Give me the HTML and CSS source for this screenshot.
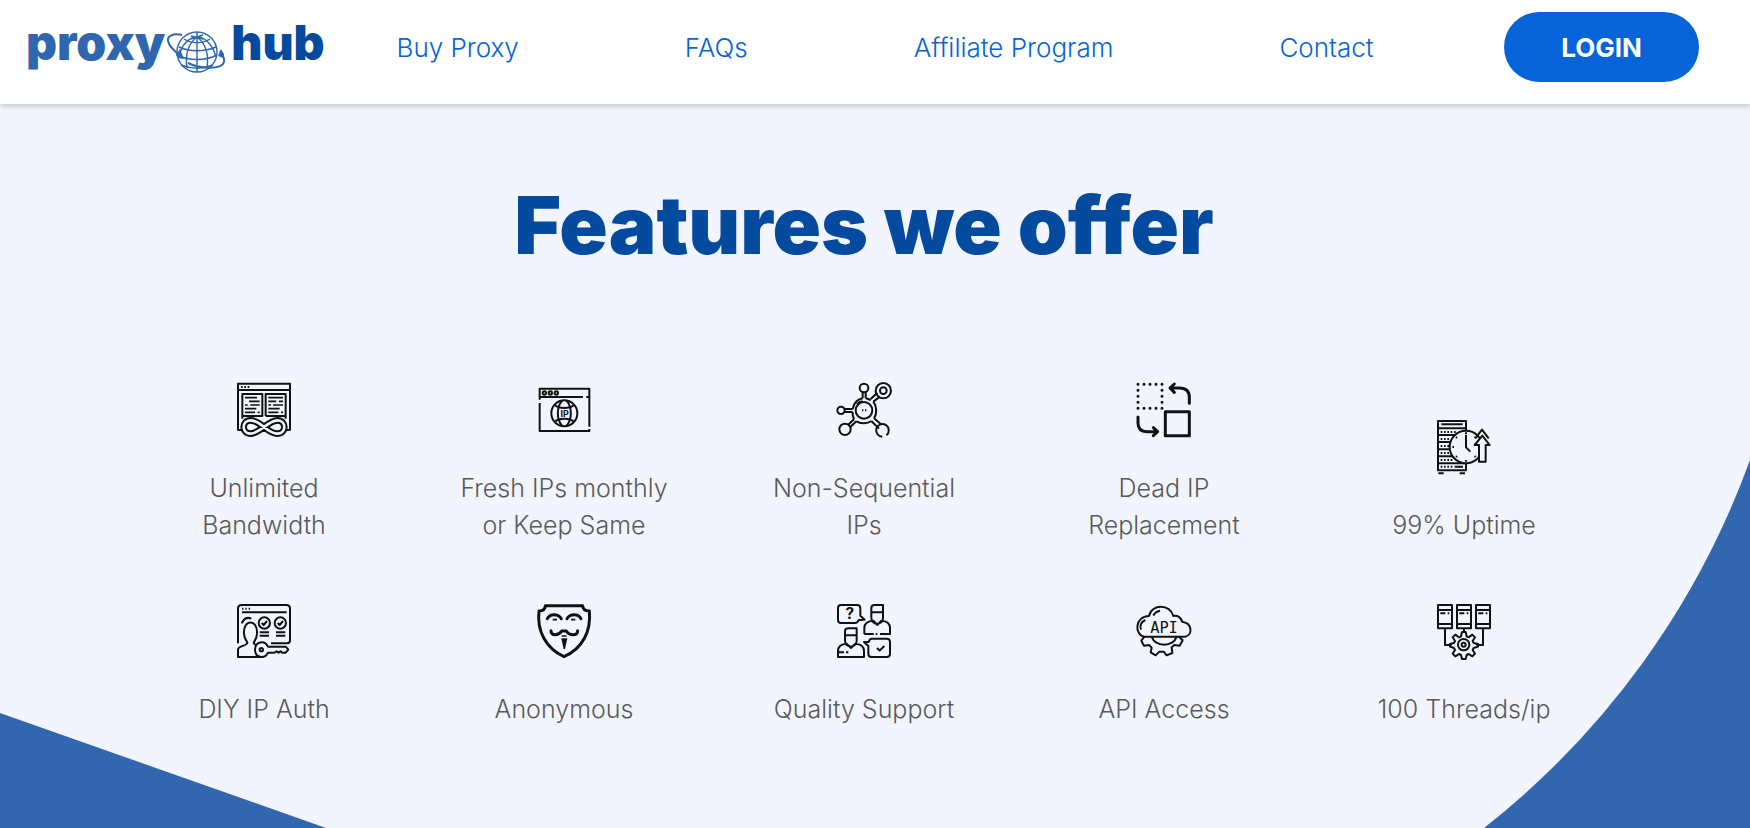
FILE: index.html
```html
<!DOCTYPE html>
<html lang="en">
<head>
    <meta charset="utf-8">
    <title>Proxy Hub</title>
    <meta name="viewport" content="width=device-width, initial-scale=1">
    <link rel="stylesheet" href="styles.css">
</head>
<body>
    <header class="header">
        <a class="logo" href="#">
            <span class="logo-proxy">proxy</span>
            <svg class="logo-globe" viewBox="0 0 58 44" aria-hidden="true">
                <g fill="none" stroke="#2f66b0" stroke-width="1.4">
                    <circle cx="30" cy="22" r="20"/>
                    <path d="M30 7C22 13 18 24 20 38M30 7c8 6 12 17 10 31M30 7v35M30 7c-8 0-16 8-18 20M30 7c8 0 16 8 19 20"/>
                    <path d="M24 6l12 3M36 5L24 9M30 2v6M17 9c8 5 18 5 26 0M12 17c10 5 26 5 37 0M10 25c12 6 28 6 40 0M14 35c10 4 22 4 32 0"/>
                </g>
                <g fill="none" stroke="#2f66b0" stroke-width="2">
                    <path d="M15 5C6 3 0 6 1 11c1 5 7 11 15 17"/>
                    <path d="M21 33c12 6 34 7 36-1 1-4-1-7-4-11"/>
                </g>
                <path fill="#2f66b0" d="M9 25l4-6 4 10-6-1zM51 26l3-7 3 5-1 4z"/>
            </svg>
            <span class="logo-hub">hub</span>
        </a>
        <nav class="nav">
            <a href="#">Buy Proxy</a>
            <a href="#">FAQs</a>
            <a href="#">Affiliate Program</a>
            <a href="#">Contact</a>
        </nav>
        <button class="login" type="button">LOGIN</button>
    </header>

    <main class="features">
        <svg class="shape shape-left" viewBox="0 0 326 115" aria-hidden="true"><path d="M0 0l326 115H0z"/></svg>
        <svg class="shape shape-right" viewBox="0 0 266 368" aria-hidden="true"><path d="M266 0A826 826 0 0 1 0 368h266z"/></svg>

        <h1 class="title">Features we offer</h1>

        <ul class="grid">
            <li class="item">
                <svg class="icon" viewBox="0 0 162 162" aria-hidden="true">
                    <path d="M15 141H3V2h156v139h-12M3 21h156"/>
                    <path d="M12 12h5M22 12h5M32 12h5"/>
                    <path d="M16 107V33h60v66H16M86 99V33h60v74M86 99h60"/>
                    <path class="thin" d="M24 44h36M36 55h32M24 66h8M40 66h28M24 77h34M24 88h30M62 88h6M94 44h44M94 55h24M126 55h12M94 66h8M108 66h30M94 77h34M94 88h30M132 88h6"/>
                    <path class="loop" d="M81 132C64 118 52 112 41 112c-28 0-28 40 0 40 12 0 24-8 40-20 16-12 28-20 40-20 28 0 28 40 0 40-11 0-23-6-40-20z"/>
                    <path class="loop-inner" d="M81 132C64 118 52 112 41 112c-28 0-28 40 0 40 12 0 24-8 40-20 16-12 28-20 40-20 28 0 28 40 0 40-11 0-23-6-40-20z"/>
                </svg>
                <span>Unlimited<br>Bandwidth</span>
            </li>
            <li class="item">
                <svg class="icon" viewBox="0 0 162 162" aria-hidden="true">
                    <path d="M8 50V17h149v114M8 60v84h149v-6M8 42h130M148 42h9"/>
                    <circle cx="22" cy="30" r="5"/><circle cx="40" cy="30" r="5"/><circle cx="58" cy="30" r="5"/>
                    <circle cx="82" cy="91" r="39"/>
                    <path d="M53 66c14 12 44 12 58 0M53 116c14-12 44-12 58 0M76 53c-18 18-18 58 0 76M88 53c18 18 18 58 0 76"/>
                    <text class="icon-text" x="83" y="101" font-size="27">IP</text>
                </svg>
                <span>Fresh IPs monthly<br>or Keep Same</span>
            </li>
            <li class="item">
                <svg class="icon" viewBox="0 0 162 162" aria-hidden="true">
                    <circle cx="81" cy="15" r="13"/><circle cx="139" cy="23" r="23"/><circle cx="139" cy="23" r="10"/>
                    <circle cx="12" cy="82" r="11"/><circle cx="24" cy="139" r="17"/>
                    <path d="M136 161a19 19 0 1 1 12-4"/>
                    <circle cx="81" cy="82" r="25"/>
                    <path d="M77 28v18M86 28v18M23 78h24M23 87h24M101 48l20-19M109 56l20-15M33 126l18-17M40 132l18-17M103 114l23 23M111 106l21 18"/>
                    <path d="M77 46C62 49 50 61 47 78M86 46c6 1 11 3 15 6M109 56c10 13 12 36 2 50M103 114c-12 8-32 9-45 1M51 109c-3-6-5-14-4-22M60 64c5-6 10-8 17-9"/>
                    <path d="M75 82h4M84 82h4"/>
                </svg>
                <span>Non-Sequential<br>IPs</span>
            </li>
            <li class="item">
                <svg class="icon bold" viewBox="0 0 162 162" aria-hidden="true">
                    <g stroke-linecap="round">
                        <path stroke-dasharray="0 18" d="M3 4h72v72H3V4"/>
                        <path d="M157 61V43c0-20-10-28-30-28h-27M112 3L99 15l13 13M3 102v18c0 18 10 26 27 26h30M49 134l13 12-13 12"/>
                    </g>
                    <path d="M85 86h72v72H85z"/>
                </svg>
                <span>Dead IP<br>Replacement</span>
            </li>
            <li class="item">
                <svg class="icon" viewBox="0 0 162 162" aria-hidden="true">
                    <path d="M3 3h84v148H3zM3 25h84M3 45h84M3 66h84M3 88h84M3 109h84M3 130h84"/>
                    <path d="M13 13h64M53 140h25M4 160h16M68 160h16"/>
                    <path stroke-dasharray="5 5" d="M11 36h46M11 57h30M11 78h28M11 99h28M11 120h38M11 140h36"/>
                    <circle class="paper" cx="87" cy="81" r="49"/>
                    <path d="M87 44v38l13 13M87 37v5M87 120v5M46 81h5M57 51l3 3M57 111l3-3M116 51l-3 3M116 111l-3-3"/>
                    <path class="paper" d="M126 125V75h-13l23-28 22 28h-12v50z"/>
                    <path d="M115 55l20-26 20 26"/>
                </svg>
                <span>99% Uptime</span>
            </li>
            <li class="item">
                <svg class="icon" viewBox="0 0 162 162" aria-hidden="true">
                    <path d="M3 118V14Q3 3 14 3h134q11 0 11 11v95q0 9-9 9h-48M15 25h134"/>
                    <path d="M15 14h4M25 14h4M35 14h4"/>
                    <circle cx="82" cy="57" r="17"/><circle cx="130" cy="57" r="17"/>
                    <path d="M74 57l6 6 10-12M122 57l6 6 10-12M68 85h28M68 95h28M117 85h28M117 95h28M14 58c8-18 20-18 29-14"/>
                    <path class="paper" d="M3 159v-22c0-12 24-10 28-20-1-8-9-10-10-28-3-45 42-45 39 0-1 18-8 20-10 28 3 8 16 9 25 14v28z"/>
                    <path class="paper" d="M93 128h53l8 9-8 9h-10l-5-4-6 4-6-4-7 4H93c-12 22-39 14-39-9s28-31 39-9z"/>
                    <circle cx="73" cy="137" r="5"/>
                </svg>
                <span>DIY IP Auth</span>
            </li>
            <li class="item">
                <svg class="icon bold" viewBox="0 0 162 162" aria-hidden="true">
                    <path d="M25 5h112c0 10 8 15 20 16 6 60-20 113-76 137C27 134-1 81 6 21c12-1 19-6 19-16z"/>
                    <path stroke-linecap="round" d="M31 44c8-16 33-16 42 0M90 44c9-16 34-16 42 0M42 80c0 16 23 16 32 1h14c9 15 34 15 34-1"/>
                    <path class="thin" d="M47 47h13M102 47h13M74 96h15"/>
                    <path class="solid" d="M73 103h18l-7 32h-4z"/>
                </svg>
                <span>Anonymous</span>
            </li>
            <li class="item">
                <svg class="icon" viewBox="0 0 162 162" aria-hidden="true">
                    <path d="M12 3h48q10 0 10 10v22l13 12-18 1q-3 9-11 9H12q-9 0-9-9V12q0-9 9-9z"/>
                    <text class="icon-text" x="38" y="46" font-size="46">?</text>
                    <path d="M103 42V12q0-9 10-9h25v39c0 23-35 23-35 0zM103 25h35M82 90V72c0-15 12-21 27-22l12 13 12-13c15 1 26 7 26 22v18h-30M82 90h28M116 90h5"/>
                    <path d="M24 110V82q0-9 10-9h25v37c0 23-35 23-35 0zM24 94h35M3 159v-18c0-15 12-21 26-22l13 13 13-13c15 1 26 7 26 22v18zM3 145h18M27 145h7"/>
                    <path d="M104 104h45q10 0 10 10v35q0 10-10 10h-45q-10 0-10-10v-23l-13-12h14q3-10 9-10zM120 132l8 8 14-14"/>
                </svg>
                <span>Quality Support</span>
            </li>
            <li class="item">
                <svg class="icon" viewBox="0 0 162 162" aria-hidden="true">
                    <path d="M22 98C-8 92-8 38 36 36c8-38 64-36 73 0 14-3 24 6 26 17 32 4 32 40 10 45zM12 77c-5-14 2-24 13-29M49 35c4-9 11-13 20-15"/>
                    <path d="M22 98l-9 12 8 15 15-2 8 8-3 14 15 9 11-11h13l9 11 17-7-2-17 8-7 16 2 9-16-13-12M45 98c7 32 66 32 73 0"/>
                    <text class="icon-text mono" x="81" y="86" font-size="46">API</text>
                </svg>
                <span>API Access</span>
            </li>
            <li class="item">
                <svg class="icon" viewBox="0 0 162 162" aria-hidden="true">
                    <path d="M3 3h42v70H3zM60 3h42v70H60zM117 3h42v70h-42zM3 18h42M60 18h42M117 18h42M3 60h42M60 60h42M117 60h42"/>
                    <path d="M10 28h15M32 28h5M67 28h15M89 28h5M124 28h15M146 28h5M81 73v10M24 73v50h20M138 73v50h-20"/>
                    <path d="M75 84h11l3 13 6 3 11-8 8 8-7 11 3 6 13 3v8l-13 4-3 6 7 11-8 8-11-7-6 3-3 12H75l-3-12-6-3-11 7-8-8 7-11-3-6-12-4v-8l12-3 3-6-7-11 8-8 11 8 6-3z"/>
                    <circle cx="80" cy="122" r="17"/><circle cx="80" cy="122" r="6"/>
                </svg>
                <span>100 Threads/ip</span>
            </li>
        </ul>
    </main>
</body>
</html>
```

FILE: styles.css
```css
* { box-sizing: border-box; }

body {
    margin: 0;
    min-height: 100vh;
    display: flex;
    flex-direction: column;
    background: #f2f5fd;
    color: #5a5a5a;
    font-family: Inter, Lato, sans-serif;
}

a { text-decoration: none; }

/* header */
.header {
    position: relative;
    z-index: 1;
    display: flex;
    align-items: flex-start;
    padding: 12px 51px 20px 26px;
    background: #fff;
    box-shadow: 0 2px 6px rgba(0, 0, 0, 0.2);
}

.logo {
    display: flex;
    align-items: flex-start;
    font-size: 48px;
    line-height: 62px;
    font-weight: 900;
}
.logo-proxy { color: #2f66b0; }
.logo-globe { width: 58px; height: 44px; margin: 18px 6px 0 2px; }
.logo-hub { color: #044a9e; }

.nav {
    display: flex;
    gap: 166px;
    margin-left: 72px;
    line-height: 72px;
    font-size: 26px;
    font-weight: 300;
}
.nav a { color: #0664d8; }

.login {
    width: 195px;
    height: 70px;
    margin-left: auto;
    border: 0;
    border-radius: 35px;
    background: #0664d8;
    color: #fff;
    font-family: inherit;
    font-size: 26px;
    font-weight: 700;
}

/* features */
.features {
    position: relative;
    flex: 1;
    padding: 71px 22px 100px 0;
    overflow: hidden;
}

.title {
    margin: 0;
    color: #044a9e;
    font-size: 80px;
    line-height: 100px;
    font-weight: 900;
    text-align: center;
}

.grid {
    position: relative;
    display: grid;
    grid-template-columns: repeat(5, 1fr);
    align-items: end;
    row-gap: 60px;
    max-width: 1500px;
    margin: 108px auto 0;
    padding: 0;
    list-style: none;
}

.item {
    display: flex;
    flex-direction: column;
    align-items: center;
    gap: 33px;
    font-size: 25px;
    line-height: 37px;
    font-weight: 300;
    text-align: center;
}

.icon {
    width: 54px;
    height: 54px;
    overflow: visible;
    fill: none;
    stroke: #111;
    stroke-width: 6;
    stroke-linejoin: round;
}
.icon.bold { stroke-width: 9; }
.icon .thin { stroke-width: 5; }
.icon .loop { stroke-width: 20; }
.icon .loop-inner { stroke: #f2f5fd; stroke-width: 8; }
.icon .paper { fill: #f2f5fd; }
.icon .solid { fill: #111; stroke: none; }
.icon-text {
    fill: #111;
    stroke: none;
    font-weight: 700;
    text-anchor: middle;
}
.icon-text.mono { font-family: "DejaVu Sans Mono", monospace; font-weight: 400; }

/* corner shapes */
.shape { position: absolute; bottom: 0; fill: #3267b0; }
.shape-left { left: 0; width: 326px; }
.shape-right { right: 0; width: 266px; }
```
